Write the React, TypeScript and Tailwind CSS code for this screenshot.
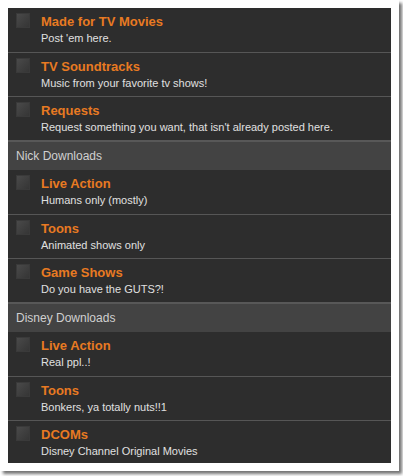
import React from 'react';

type Forum = { title: string; desc: string };
type Section = { header?: string; forums: Forum[] };

const sections: Section[] = [
  {
    forums: [
      { title: 'Made for TV Movies', desc: "Post 'em here." },
      { title: 'TV Soundtracks', desc: 'Music from your favorite tv shows!' },
      { title: 'Requests', desc: "Request something you want, that isn't already posted here." },
    ],
  },
  {
    header: 'Nick Downloads',
    forums: [
      { title: 'Live Action', desc: 'Humans only (mostly)' },
      { title: 'Toons', desc: 'Animated shows only' },
      { title: 'Game Shows', desc: 'Do you have the GUTS?!' },
    ],
  },
  {
    header: 'Disney Downloads',
    forums: [
      { title: 'Live Action', desc: 'Real ppl..!' },
      { title: 'Toons', desc: 'Bonkers, ya totally nuts!!1' },
      { title: 'DCOMs', desc: 'Disney Channel Original Movies' },
    ],
  },
];

const ForumRow = ({ forum, first }: { forum: Forum; first: boolean }) => (
  <div className={`flex h-[44px] ${first ? '' : 'border-t border-[#565656]'}`}>
    <div className="w-[14px] h-[15px] ml-[8px] mt-[5px] bg-gradient-to-br from-[#4a4a4a] to-[#353535] border border-[#3a3a3a]" />
    <div className="ml-[11px] mt-[6px] flex flex-col">
      <span className="text-[13px] leading-[16px] font-bold text-[#e87a22]">{forum.title}</span>
      <span className="text-[11px] leading-[15px] text-[#e0e0e0] mt-[1px]">{forum.desc}</span>
    </div>
  </div>
);

export default function App() {
  return (
    <div className="w-[403px] h-[476px] bg-white" style={{ fontFamily: '"Liberation Sans", Arial, sans-serif' }}>
      <div className="w-[399px] h-[471px] bg-white pt-[8px] pl-[8px] shadow-[3px_3px_3px_rgba(0,0,0,0.55)]">
        <div className="w-[383px] h-[455px] bg-[#2d2d2d]">
          {sections.map((s, si) => (
            <div key={si}>
              {s.header && (
                <div className="h-[30px] bg-[#434343] border-t-[2px] border-[#585858] flex items-center pl-[8px] text-[12px] text-[#d0d0d0]">
                  {s.header}
                </div>
              )}
              {s.forums.map((f, fi) => (
                <ForumRow key={fi} forum={f} first={fi === 0} />
              ))}
            </div>
          ))}
        </div>
      </div>
    </div>
  );
}
